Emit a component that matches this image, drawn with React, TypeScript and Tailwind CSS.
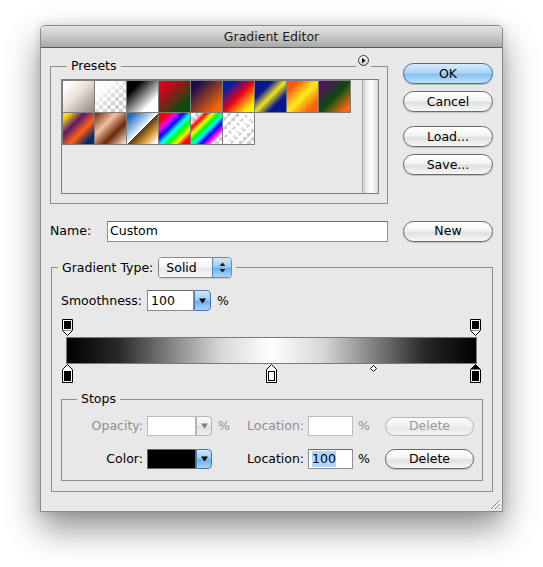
import React from "react";

type Swatch = { c: string; checker?: boolean };

const CHECKER =
  "bg-[image:repeating-conic-gradient(#cfcfcf_0_25%,#ffffff_0_50%)] bg-[length:8px_8px]";

const SWATCHES: Swatch[] = [
  { c: "bg-[linear-gradient(135deg,#ffffff_12%,#e8e1d8_45%,#95877a_100%)]" },
  { c: "bg-[linear-gradient(135deg,#ffffff_18%,rgba(255,255,255,0)_70%)]", checker: true },
  { c: "bg-[linear-gradient(135deg,#000000_22%,#ffffff_75%)]" },
  { c: "bg-[linear-gradient(135deg,#e0001a_15%,#0b4a12_80%)]" },
  { c: "bg-[linear-gradient(135deg,#190c4c_15%,#ff6a00_88%)]" },
  { c: "bg-[linear-gradient(135deg,#0a1ea0_18%,#e8001a_50%,#fff000_85%)]" },
  { c: "bg-[linear-gradient(135deg,#0a1690_28%,#f3e51a_50%,#0a1690_72%)]" },
  { c: "bg-[linear-gradient(135deg,#ff5a10_18%,#ffec1a_50%,#ff6410_82%)]" },
  { c: "bg-[linear-gradient(135deg,#5a0e5e_10%,#0a4a12_50%,#ff6a10_90%)]" },
  { c: "bg-[linear-gradient(135deg,#f8d810_10%,#5a1a6a_35%,#ff6010_60%,#0a2a6a_85%)]" },
  { c: "bg-[linear-gradient(135deg,#6a2a08_0%,#f2c0a0_35%,#6a2808_65%,#f0d4c4_95%)]" },
  { c: "bg-[linear-gradient(135deg,#1e6cc0_10%,#d6e8f8_45%,#ffffff_50%,#5a3808_51%,#e0a040_75%,#ffffff_95%)]" },
  { c: "bg-[linear-gradient(135deg,#ff0000_15%,#ff00ff_28%,#0000ff_40%,#00ffff_52%,#00ff00_64%,#ffff00_76%,#ff0000_88%)]" },
  {
    c: "bg-[linear-gradient(135deg,rgba(255,0,0,0)_15%,#ff0000_25%,#ffff00_35%,#00ff00_45%,#00ffff_55%,#0000ff_65%,#ff00ff_75%,rgba(255,0,255,0)_85%)]",
    checker: true,
  },
  {
    c: "bg-[repeating-linear-gradient(135deg,#ffffff_0_3px,rgba(255,255,255,0)_3px_7px)]",
    checker: true,
  },
];

const BTN =
  "flex items-center justify-center rounded-full border border-[#6a6a6a] bg-[linear-gradient(#ffffff,#f4f4f4_45%,#e0e0e0_55%,#f7f7f7)] shadow-[0_1px_1px_rgba(0,0,0,0.18)] text-black";
const BTN_OK =
  "flex items-center justify-center rounded-full border border-[#3f6ea6] bg-[linear-gradient(#d6ecfd,#aed6f8_45%,#86c2f4_55%,#bfe3fc)] shadow-[0_1px_1px_rgba(0,0,0,0.2)] text-black";
const BTN_DIS =
  "flex items-center justify-center rounded-full border border-[#b4b4b4] bg-[linear-gradient(#fbfbfb,#f0f0f0_50%,#e6e6e6_51%,#f3f3f3)] text-[#9a9a9a]";

const INPUT = "h-[21px] border border-[#8e8e8e] border-t-[#6c6c6c] bg-white flex items-center";

function DownArrow({ color = "#000" }: { color?: string }) {
  return (
    <svg width="7" height="6" viewBox="0 0 7 6">
      <path d="M0 0.5 H7 L3.5 5.5 Z" fill={color} />
    </svg>
  );
}

function BlueDrop({ h = "h-[21px]", w = "w-[17px]" }: { h?: string; w?: string }) {
  return (
    <div
      className={`${h} ${w} flex items-center justify-center rounded-r-[4px] border border-[#4a78ae] bg-[linear-gradient(#d2e9fd,#9ccbf6_45%,#6cb0f0_55%,#a8d6fb)]`}
    >
      <DownArrow />
    </div>
  );
}

function GrayDrop() {
  return (
    <div className="h-[20px] w-[16px] flex items-center justify-center rounded-r-[4px] border border-[#b2b2b2] bg-[linear-gradient(#fafafa,#ececec_50%,#dedede_51%,#efefef)]">
      <DownArrow color="#7c7c7c" />
    </div>
  );
}

function OpacityStop() {
  return (
    <svg width="11" height="17" viewBox="0 0 11 17" className="block">
      <path d="M0.5 0.5 H10.5 V11.5 L5.5 16.5 L0.5 11.5 Z" fill="#fff" stroke="#000" />
      <rect x="2" y="2" width="7" height="8" fill="#000" />
      <path d="M0.5 11.5 H10.5" stroke="#8a8a8a" />
    </svg>
  );
}

function ColorStop({ color, selected }: { color: string; selected?: boolean }) {
  return (
    <svg width="11" height="19" viewBox="0 0 11 19" className="block">
      <path d="M5.5 0.5 L10.5 5.5 V18.5 H0.5 V5.5 Z" fill="#fff" stroke="#000" />
      {selected && <path d="M5.5 0.5 L10.5 5.5 H0.5 Z" fill="#000" />}
      <rect x="2.5" y="7.5" width="6" height="9" fill={color} stroke="#000" />
    </svg>
  );
}

const opacityStops = [0, 100];
const colorStops = [
  { pos: 0, color: "#000000", selected: false },
  { pos: 50, color: "#ffffff", selected: false },
  { pos: 100, color: "#000000", selected: true },
];
const midpoint = 75;

export default function App() {
  return (
    <div className="w-[543px] h-[567px] bg-white pl-[40px] pt-[25px] font-['DejaVu_Sans',sans-serif] text-[12.5px] leading-[16px] text-black">
      <div className="relative flex flex-col w-[463px] h-[487px] rounded-t-[5px] border border-[#8a8a8a] bg-[#e8e8e8] shadow-[0_16px_34px_rgba(0,0,0,0.45),0_0_8px_rgba(0,0,0,0.12)]">
        {/* title bar */}
        <div className="h-[22px] shrink-0 flex items-center justify-center rounded-t-[4px] border-b border-[#5c5c5c] bg-[linear-gradient(#e4e4e4,#cdcdcd_45%,#a8a8a8)] text-[#1a1a1a]">
          Gradient Editor
        </div>

        <div className="flex flex-col px-[9px] pt-[10px]">
          {/* top row: presets + buttons */}
          <div className="flex gap-[15px]">
            <div className="relative w-[338px]">
              <fieldset className="border border-[#8e8e8e] pl-[10px] pr-[8px] pt-[5px] pb-[9px]">
                <legend className="ml-[6px] px-[4px] leading-[16px]">Presets</legend>
                <div className="flex h-[115px] border border-[#7e7e7e] bg-[#e9e9e9]">
                  <div className="flex-1">
                    <div className="flex flex-wrap w-[289px]">
                      {SWATCHES.map((s, i) => (
                        <div
                          key={i}
                          className={`-mb-px -mr-px h-[33px] w-[33px] border border-[#7d7d7d] ${s.checker ? CHECKER : ""}`}
                        >
                          <div className={`h-full w-full ${s.c}`} />
                        </div>
                      ))}
                    </div>
                  </div>
                  <div className="w-[16px] border-l border-[#a8a8a8] bg-[linear-gradient(to_right,#cfcfcf,#f2f2f2_30%,#ffffff_55%,#ececec_80%,#d6d6d6)]" />
                </div>
              </fieldset>
              <div className="absolute -top-[3px] right-[17px] h-[12px] px-[2px] bg-[#e8e8e8]">
                <svg width="11" height="11" viewBox="0 0 11 11" className="block">
                  <defs>
                    <linearGradient id="mg" x1="0" y1="0" x2="0" y2="1">
                      <stop offset="0" stopColor="#ffffff" />
                      <stop offset="1" stopColor="#c8c8c8" />
                    </linearGradient>
                  </defs>
                  <circle cx="5.5" cy="5.5" r="5" fill="url(#mg)" stroke="#3a3a3a" />
                  <path d="M4 2.8 L7.6 5.5 L4 8.2 Z" fill="#000" />
                </svg>
              </div>
            </div>

            <div className="flex flex-col w-[90px] pt-[5px]">
              <div className={`${BTN_OK} h-[21px]`}>OK</div>
              <div className={`${BTN} h-[21px] mt-[7px]`}>Cancel</div>
              <div className={`${BTN} h-[21px] mt-[14px]`}>Load...</div>
              <div className={`${BTN} h-[21px] mt-[7px]`}>Save...</div>
            </div>
          </div>

          {/* name row */}
          <div className="mt-[16px] flex items-center h-[22px]">
            <div className="w-[57px]">Name:</div>
            <div className={`${INPUT} w-[281px] pl-[2px]`}>Custom</div>
            <div className={`${BTN} ml-[15px] h-[21px] w-[90px]`}>New</div>
          </div>

          {/* gradient type group */}
          <fieldset className="mt-[15px] ml-px w-[442px] border border-[#8e8e8e] px-[9px] pt-[12px] pb-[10px]">
            <legend className="-ml-[3px] px-[4px] flex items-center">
              <span>Gradient Type:</span>
              <div className="ml-[5px] flex h-[21px] w-[74px] overflow-hidden rounded-[4px] border border-[#868686] shadow-[0_1px_1px_rgba(0,0,0,0.12)]">
                <div className="flex-1 flex items-center pl-[7px] bg-[linear-gradient(#ffffff,#f5f5f5_45%,#e6e6e6_55%,#f7f7f7)]">
                  Solid
                </div>
                <div className="w-[19px] flex items-center justify-center border-l border-[#5a86b9] bg-[linear-gradient(#d2e9fd,#9ccbf6_45%,#6cb0f0_55%,#a8d6fb)]">
                  <svg width="7" height="11" viewBox="0 0 7 11" className="block">
                    <path d="M3.5 0.5 L6.5 4 H0.5 Z" fill="#1a1a1a" />
                    <path d="M0.5 7 H6.5 L3.5 10.5 Z" fill="#1a1a1a" />
                  </svg>
                </div>
              </div>
            </legend>

            {/* smoothness */}
            <div className="flex items-center h-[21px]">
              <div className="w-[86px]">Smoothness:</div>
              <div className={`${INPUT} w-[47px] pl-[3px]`}>100</div>
              <BlueDrop />
              <div className="ml-[6px]">%</div>
            </div>

            {/* gradient bar with stops */}
            <div className="mt-[8px] ml-[5px] mr-[6px]">
              <div className="relative h-[18px] ml-px mr-[2px]">
                {opacityStops.map((p) => (
                  <div key={p} className="absolute top-0 -ml-[5px]" style={{ left: `${p}%` }}>
                    <OpacityStop />
                  </div>
                ))}
              </div>
              <div className="h-[27px] border border-[#7a7a7a] bg-[linear-gradient(to_right,#000000_0%,#282828_12.5%,#808080_25%,#d7d7d7_37.5%,#ffffff_50%,#d7d7d7_62.5%,#808080_75%,#282828_87.5%,#000000_100%)]" />
              <div className="relative h-[20px] ml-px mr-[2px]">
                {colorStops.map((s) => (
                  <div key={s.pos} className="absolute top-0 -ml-[5px]" style={{ left: `${s.pos}%` }}>
                    <ColorStop color={s.color} selected={s.selected} />
                  </div>
                ))}
                <div className="absolute top-[1px] -ml-[3px]" style={{ left: `${midpoint}%` }}>
                  <svg width="7" height="7" viewBox="0 0 7 7" className="block">
                    <path d="M3.5 0.5 L6.5 3.5 L3.5 6.5 L0.5 3.5 Z" fill="#fff" stroke="#000" />
                  </svg>
                </div>
              </div>
            </div>

            {/* stops group */}
            <fieldset className="mt-[7px] border border-[#8e8e8e] pl-px pt-[9px] pb-[11px]">
              <legend className="ml-[14px] px-[4px] leading-[16px]">Stops</legend>
              <div className="flex items-center h-[20px] text-[#8f8f8f]">
                <div className="w-[80px] text-right">Opacity:</div>
                <div className="ml-[4px] h-[20px] w-[49px] border border-[#b9b9b9] bg-white" />
                <GrayDrop />
                <div className="w-[35px] pl-[6px]">%</div>
                <div className="w-[61px]">Location:</div>
                <div className="h-[20px] w-[45px] border border-[#b9b9b9] bg-white" />
                <div className="w-[32px] pl-[5px]">%</div>
                <div className={`${BTN_DIS} h-[19px] w-[89px]`}>Delete</div>
              </div>
              <div className="mt-[13px] flex items-center h-[20px]">
                <div className="w-[80px] text-right">Color:</div>
                <div className="ml-[4px] h-[20px] w-[49px] border border-[#6a6a6a] bg-black" />
                <BlueDrop h="h-[20px]" w="w-[16px]" />
                <div className="w-[35px]" />
                <div className="w-[61px]">Location:</div>
                <div className="h-[20px] w-[45px] border border-[#8e8e8e] border-t-[#6c6c6c] bg-white flex items-center pl-[3px]">
                  <span className="bg-[#b3d3fb]">100</span>
                </div>
                <div className="w-[32px] pl-[5px]">%</div>
                <div className={`${BTN} h-[20px] w-[89px]`}>Delete</div>
              </div>
            </fieldset>
          </fieldset>
        </div>

        {/* resize grip */}
        <div className="absolute bottom-[1px] right-[1px]">
          <svg width="12" height="12" viewBox="0 0 12 12" className="block">
            <path d="M11 2 L2 11 M11 6 L6 11 M11 10 L10 11" stroke="#8a8a8a" strokeWidth="1" />
            <path d="M12 3 L3 12 M12 7 L7 12" stroke="#ffffff" strokeWidth="1" />
          </svg>
        </div>
      </div>
    </div>
  );
}
